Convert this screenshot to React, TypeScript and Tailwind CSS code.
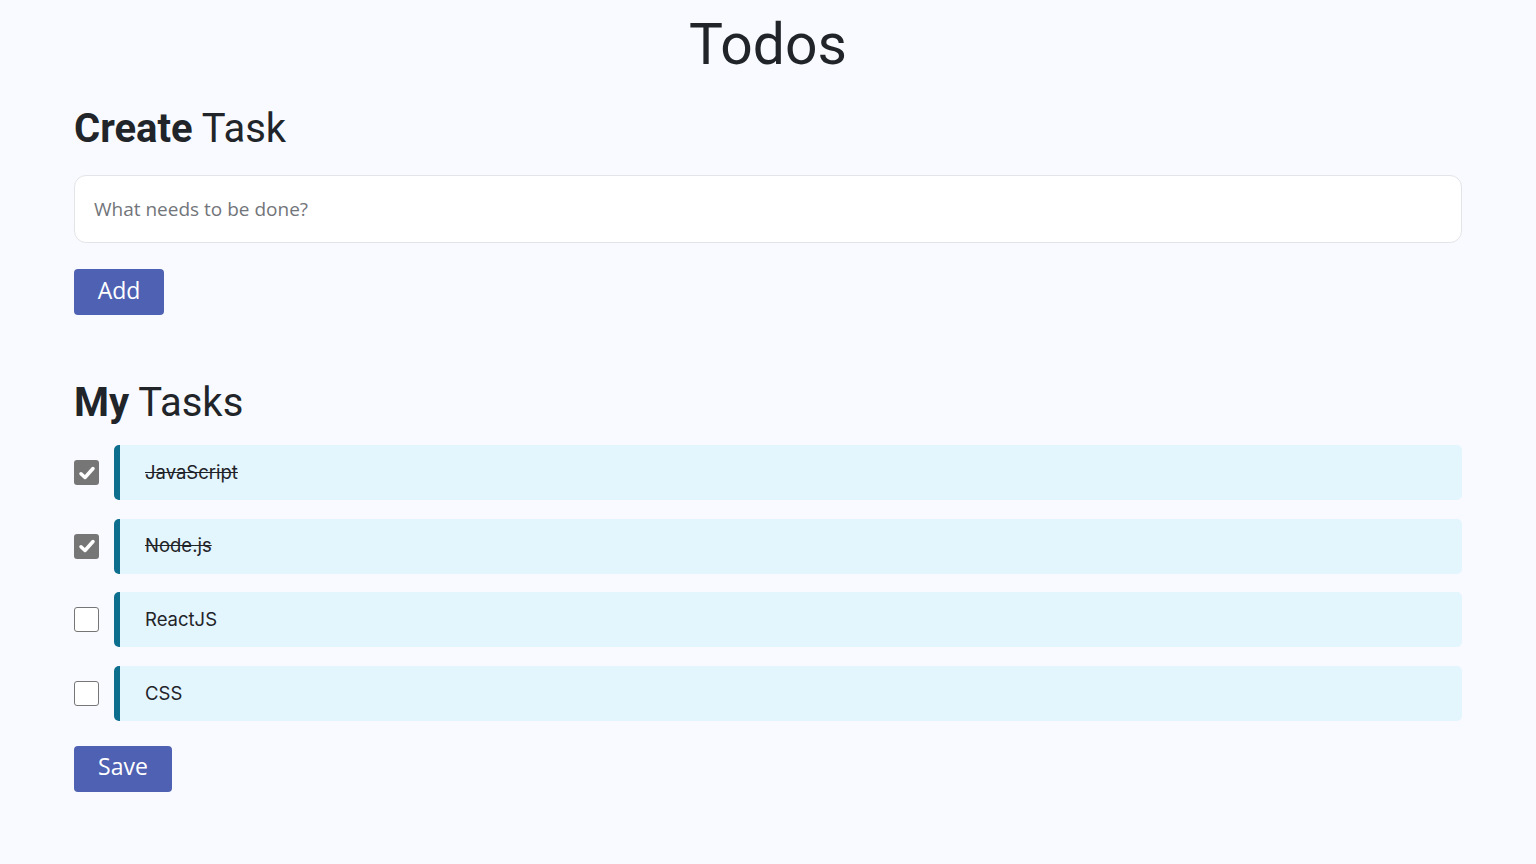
import React from "react";

const tasks = [
  { name: "JavaScript", done: true },
  { name: "Node.js", done: true },
  { name: "ReactJS", done: false },
  { name: "CSS", done: false },
];

function Check({ on }: { on: boolean }) {
  if (on)
    return (
      <div className="w-[25px] h-[25px] rounded-[3px] bg-[#767676] flex items-center justify-center shrink-0">
        <svg width="20" height="20" viewBox="0 0 16 16">
          <path d="M3.2 8.6 L6.4 11.6 L12.8 4.4" fill="none" stroke="#fff" strokeWidth="2.8" strokeLinecap="round" strokeLinejoin="round" />
        </svg>
      </div>
    );
  return <div className="w-[25px] h-[25px] rounded-[3px] bg-white border border-[#767676] shrink-0" />;
}

export default function App() {
  return (
    <div className="min-h-[864px] bg-[#f8faff] text-[#212529] px-[74px] pb-10 font-['Roboto',sans-serif]">
      <h1 className="text-center text-[57px] leading-[68px] pt-[11px] font-normal">Todos</h1>
      <h2 className="text-[40px] leading-[48px] mt-[26px]">
        <span className="font-bold">Create</span> Task
      </h2>
      <div className="mt-[22px] h-[68px] rounded-[12px] border border-[#e3e4e8] bg-white flex items-center px-[19px]">
        <span className="text-[19px] text-[#72757a] font-['Open_Sans',sans-serif]">What needs to be done?</span>
      </div>
      <button className="mt-[26px] w-[90px] h-[46px] rounded-[4px] bg-[#4f61b3] text-white text-[23px] leading-none pb-[4px] font-['Open_Sans',sans-serif] flex items-center justify-center">
        Add
      </button>
      <h2 className="text-[40px] leading-[48px] mt-[64px]">
        <span className="font-bold">My</span> Tasks
      </h2>
      <div className="mt-[18px] flex flex-col gap-[18.67px]">
        {tasks.map((t) => (
          <div key={t.name} className="flex items-center gap-[15px]">
            <Check on={t.done} />
            <div className="flex-1 h-[55px] bg-[#e3f5fd] border-l-[6px] border-[#0d6e8e] rounded-[5px] flex items-center pl-[25px]">
              <span className={"text-[18.5px] text-[#1f2328] font-['Inter',sans-serif] " + (t.done ? "line-through" : "")}>{t.name}</span>
            </div>
          </div>
        ))}
      </div>
      <button className="mt-[25px] w-[98px] h-[46px] rounded-[4px] bg-[#4f61b3] text-white text-[23px] leading-none pb-[4px] font-['Open_Sans',sans-serif] flex items-center justify-center">
        Save
      </button>
    </div>
  );
}
